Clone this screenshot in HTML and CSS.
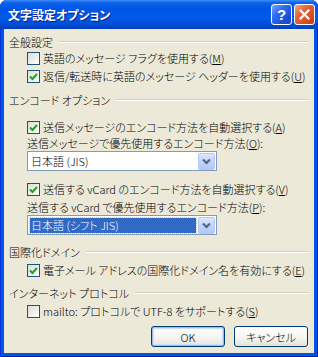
FILE: index.html
```html
<!DOCTYPE html>
<html lang="ja">
<head>
    <meta charset="UTF-8">
    <title>文字設定オプション</title>
    <link rel="stylesheet" href="styles.css">
</head>
<body>
    <div class="window">
        <div class="titlebar">
            <span class="title">文字設定オプション</span>
            <div class="caption-buttons">
                <span class="cap-btn help">?</span>
                <span class="cap-btn close">
                    <svg width="11" height="11" viewBox="0 0 11 11"><path d="M1.5 1.5 L9.5 9.5 M9.5 1.5 L1.5 9.5" stroke="#fff" stroke-width="2.2" stroke-linecap="square"/></svg>
                </span>
            </div>
        </div>
        <div class="client">
            <div class="group-head first"><span>全般設定</span></div>
            <div class="check"><span class="box"></span>英語のメッセージ フラグを使用する(<u>M</u>)</div>
            <div class="check"><span class="box checked"><svg width="11" height="11" viewBox="0 0 11 11"><polyline points="2,5.5 4.5,8 9,3" fill="none" stroke="#21A121" stroke-width="2"/></svg></span>返信/転送時に英語のメッセージ ヘッダーを使用する(<u>U</u>)</div>

            <div class="group-head second"><span>エンコード オプション</span></div>
            <div class="check gap-a"><span class="box checked"><svg width="11" height="11" viewBox="0 0 11 11"><polyline points="2,5.5 4.5,8 9,3" fill="none" stroke="#21A121" stroke-width="2"/></svg></span>送信メッセージのエンコード方法を自動選択する(<u>A</u>)</div>
            <div class="field-label">送信メッセージで優先使用するエンコード方法(<u>O</u>):</div>
            <div class="combo">
                <span class="combo-text">日本語 (JIS)</span>
                <span class="combo-btn"><svg width="9" height="7" viewBox="0 0 9 7"><polyline points="1,1.5 4.5,5 8,1.5" fill="none" stroke="#4D6185" stroke-width="2"/></svg></span>
            </div>
            <div class="check gap-b"><span class="box checked"><svg width="11" height="11" viewBox="0 0 11 11"><polyline points="2,5.5 4.5,8 9,3" fill="none" stroke="#21A121" stroke-width="2"/></svg></span>送信する vCard のエンコード方法を自動選択する(<u>V</u>)</div>
            <div class="field-label gap-c">送信する vCard で優先使用するエンコード方法(<u>P</u>):</div>
            <div class="combo focused">
                <span class="combo-text">日本語 (シフト JIS)</span>
                <span class="combo-btn"><svg width="9" height="7" viewBox="0 0 9 7"><polyline points="1,1.5 4.5,5 8,1.5" fill="none" stroke="#4D6185" stroke-width="2"/></svg></span>
            </div>

            <div class="group-head third"><span>国際化ドメイン</span></div>
            <div class="check gap-d"><span class="box checked"><svg width="11" height="11" viewBox="0 0 11 11"><polyline points="2,5.5 4.5,8 9,3" fill="none" stroke="#21A121" stroke-width="2"/></svg></span>電子メール アドレスの国際化ドメイン名を有効にする(<u>E</u>)</div>

            <div class="group-head fourth"><span>インターネット プロトコル</span></div>
            <div class="check gap-d"><span class="box"></span>mailto: プロトコルで UTF-8 をサポートする(<u>S</u>)</div>

            <div class="buttons">
                <span class="button default">OK</span>
                <span class="button">キャンセル</span>
            </div>
        </div>
    </div>
</body>
</html>
```

FILE: styles.css
```css
body {
    margin: 0;
    font-family: "MS UI Gothic", "Noto Sans CJK JP", sans-serif;
    font-size: 11px;
    font-weight: 300;
    font-feature-settings: "palt";
    color: #000;
}
.window {
    width: 318px;
    height: 357px;
    display: flex;
    flex-direction: column;
    background: #0055E5;
    border-radius: 7px 7px 0 0;
    overflow: hidden;
    box-shadow: inset 1px 0 #0831D9, inset -1px 0 #001EA0, inset 0 -1px #001EA0;
}
.titlebar {
    flex: none;
    height: 29px;
    display: flex;
    align-items: center;
    justify-content: space-between;
    padding: 0 3px 0 8px;
    background: linear-gradient(#3D8DF8 0, #0A5FEA 3px, #0055E5 9px, #0159EA 18px, #004BD3 25px, #003EB9 29px);
}
.title {
    color: #fff;
    font-weight: bold;
    font-size: 12px;
    text-shadow: 1px 1px #0A1F8A;
}
.caption-buttons {
    display: flex;
    gap: 2px;
}
.cap-btn {
    width: 19px;
    height: 19px;
    border: 1px solid #fff;
    border-radius: 3px;
    display: flex;
    align-items: center;
    justify-content: center;
    color: #fff;
    font-family: "Liberation Sans", sans-serif;
    font-weight: bold;
    font-size: 15px;
}
.help {
    background: linear-gradient(135deg, #7AA8FF 0, #2F6CF0 35%, #1A52DC 70%, #1444C0 100%);
}
.close {
    background: linear-gradient(135deg, #F3A88A 0, #E4663E 35%, #DA4F25 70%, #C23C15 100%);
}
.client {
    flex: 1;
    margin: 0 4px 4px;
    padding: 5px 6px 0 5px;
    background: #ECE9D8;
    display: flex;
    flex-direction: column;
}
.group-head {
    display: flex;
    align-items: center;
    height: 16px;
}
.group-head::after {
    content: "";
    flex: 1;
    margin-left: 6px;
    border-top: 1px solid #D0D0BF;
    border-bottom: 1px solid #fff;
}
.group-head.first { height: 15px; }
.group-head.second { margin-top: 7px; }
.group-head.third { margin-top: 9px; }
.group-head.fourth { margin-top: 6px; }
.check {
    display: flex;
    align-items: center;
    height: 18px;
    padding-left: 18px;
    white-space: nowrap;
}
.gap-a { margin-top: 10px; }
.gap-b { margin-top: 9px; }
.gap-c { margin-top: 2px; }
.gap-d { margin-top: 1px; }
.box {
    flex: none;
    width: 11px;
    height: 11px;
    margin-right: 3px;
    border: 1px solid #1C5180;
    background: linear-gradient(135deg, #DCDCD7 0, #F0F0EC 60%, #fff 100%);
    display: flex;
}
.field-label {
    height: 14px;
    line-height: 14px;
    padding-left: 18px;
    white-space: nowrap;
}
.combo {
    margin: 1px 0 0 18px;
    width: 185px;
    height: 18px;
    border: 1px solid #7F9DB9;
    background: #fff;
    display: flex;
    align-items: center;
    padding: 0 1px 0 2px;
}
.combo-text {
    flex: 1;
    height: 15px;
    line-height: 15px;
    padding-left: 1px;
}
.focused .combo-text {
    background: #316AC5;
    color: #fff;
    outline: 1px dotted #E8C36A;
    margin-right: 2px;
}
.combo-btn {
    width: 15px;
    height: 15px;
    border: 1px solid #B5C9F5;
    border-radius: 2px;
    background: linear-gradient(#DCE6FD, #C1D3FB 50%, #B4C8F6);
    display: flex;
    align-items: center;
    justify-content: center;
}
.buttons {
    margin-top: 6px;
    display: flex;
    justify-content: flex-end;
    gap: 9px;
}
.button {
    width: 72px;
    height: 19px;
    border: 1px solid #003C74;
    border-radius: 3px;
    background: linear-gradient(#FFFFFF, #F4F4F0 60%, #E3E3DB);
    display: flex;
    align-items: center;
    justify-content: center;
}
.button.default {
    box-shadow: inset 0 0 0 1px #9DBBF0, inset 0 0 0 2px #CEE0FB;
}
```
